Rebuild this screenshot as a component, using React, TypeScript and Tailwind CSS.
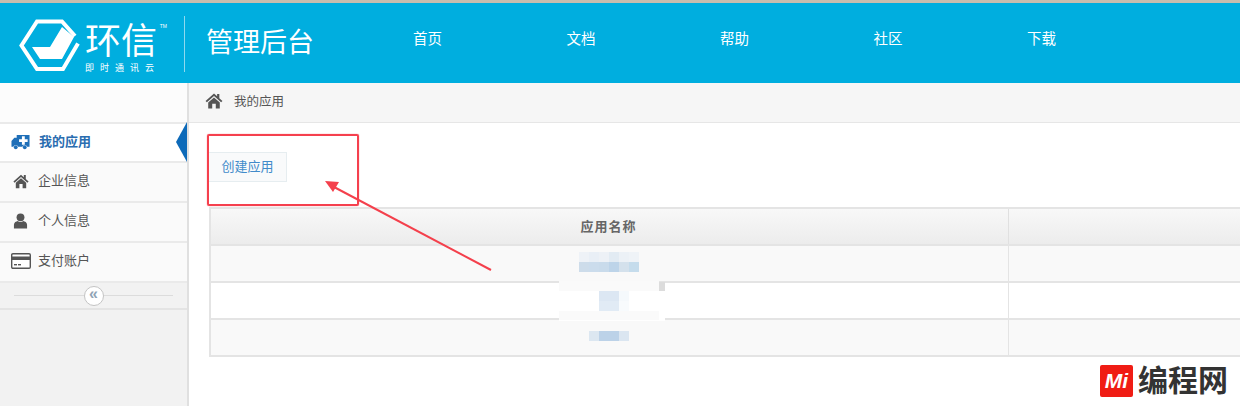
import React from "react";

const cjk = "font-['Liberation_Sans','Noto_Sans_CJK_SC',sans-serif]";

function Home({ className = "" }: { className?: string }) {
  return (
    <svg viewBox="0 0 20 18" className={className} fill="#555">
      <path d="M10 0.5 L0.5 9 L2 10.5 L10 3.5 L18 10.5 L19.5 9 L16 5.8 V1 H13.5 V3.6 Z" />
      <path d="M10 5 L3.5 10.6 V17.5 H8 V12 H12 V17.5 H16.5 V10.6 Z" />
    </svg>
  );
}

function Ambulance() {
  return (
    <svg viewBox="0 0 20 16" className="w-[19px] h-[16px]" fill="#1f6fb8">
      <path d="M6 0.5 H19.5 V13 H17 A2.6 2.6 0 0 0 12 13 H7.5 A2.6 2.6 0 0 0 2.5 13 H0.5 V7 L3.5 3.5 H6 Z" />
      <circle cx="5" cy="13.5" r="2" />
      <circle cx="14.5" cy="13.5" r="2" />
      <path d="M11.5 2 H14.5 V5 H17.5 V8 H14.5 V11 H11.5 V8 H8.5 V5 H11.5 Z" fill="#fff" />
    </svg>
  );
}

function User() {
  return (
    <svg viewBox="0 0 16 17" className="w-[15px] h-[16px]" fill="#555">
      <circle cx="8" cy="4.6" r="4.2" />
      <path d="M1 16.5 V12.5 C1 10 3.5 8.8 5 8.5 C6.5 9.8 9.5 9.8 11 8.5 C12.5 8.8 15 10 15 12.5 V16.5 Z" />
    </svg>
  );
}

function Card() {
  return (
    <svg viewBox="0 0 20 16" className="w-[20px] h-[16px]">
      <rect x="0.7" y="0.7" width="18.6" height="14.6" rx="1.2" fill="#fff" stroke="#555" strokeWidth="1.4" />
      <rect x="1" y="3.5" width="18" height="3.5" fill="#555" />
      <rect x="3" y="11" width="3" height="1.4" fill="#555" />
      <rect x="7" y="11" width="3" height="1.4" fill="#555" />
    </svg>
  );
}

function SideItem({ icon, label, active }: { icon: React.ReactNode; label: string; active?: boolean }) {
  return (
    <div
      className={
        "relative flex items-center border-b-2 border-[#eaeaea] pb-[2px] " +
        (active ? "h-[39px] bg-white" : "h-10 bg-[#fafafa]")
      }
    >
      <div className="w-[38px] shrink-0 flex justify-center pl-[4px] pr-[1px]">{icon}</div>
      <span className={"text-[13px] " + (active ? "font-bold text-[#2a6db0] ml-[1px]" : "text-[#555]")}>{label}</span>
      {active && (
        <div className="absolute right-0 top-[-2px] w-0 h-0 border-y-[20px] border-y-transparent border-r-[11px] border-r-[#0d6ab9]" />
      )}
    </div>
  );
}

function Pixels({ rows, w = 10 }: { rows: string[][]; w?: number }) {
  return (
    <div className="flex flex-col">
      {rows.map((r, i) => (
        <div key={i} className="flex justify-center h-[10px]">
          {r.map((c, j) => (
            <div key={j} className="h-full" style={{ width: w, background: c }} />
          ))}
        </div>
      ))}
    </div>
  );
}

function Row({ odd, children }: { odd: boolean; children?: React.ReactNode }) {
  return (
    <div className={"grid grid-cols-[798px_1fr] h-[37px] border-b-2 border-[#e4e4e4] " + (odd ? "bg-[#f9f9f9]" : "bg-white")}>
      <div className="border-r border-[#e4e4e4] flex items-center justify-center pb-[3px] pr-[2px]">{children}</div>
      <div />
    </div>
  );
}

export default function App() {
  const nav = ["首页", "文档", "帮助", "社区", "下载"];
  return (
    <div className={"relative w-[1240px] h-[406px] overflow-hidden bg-white " + cjk}>
      <div className="h-[3px] bg-[#c9bdae]" />
      <header className="h-[80px] bg-[#00aedf] flex items-center text-white">
        <div className="w-[185px] h-[56px] shrink-0 flex items-center pl-[15px] border-r border-[#8fd9ef] mt-[2px]">
          <svg viewBox="0 0 70 62" className="w-[70px] h-[62px] shrink-0 mt-[2px]">
            <path d="M63 29.5 L48 55 H22 L6.5 31.5 L22 7.5 H47 L60 22" fill="none" stroke="#fff" strokeWidth="4" />
            <path d="M17 33 H35 L47 13 L59 23 L47 45 H25 Z" fill="#fff" />
          </svg>
          <div className="flex flex-col items-start mt-[8px]">
            <div className="text-[36px] leading-[38px] relative whitespace-nowrap">
              环信
              <span className="absolute right-[-10px] top-[1px] text-[5px] leading-none">TM</span>
            </div>
            <div className="text-[9px] leading-[11px] tracking-[6px] mt-[2px] whitespace-nowrap">即时通讯云</div>
          </div>
        </div>
        <div className="w-[206px] shrink-0 pl-[21px] text-[27px] leading-none mt-[1px]">管理后台</div>
        <nav className="flex mt-[-9px] ml-[22px]">
          {nav.map((n) => (
            <div key={n} className="w-[153.5px] text-[14.5px] leading-5">{n}</div>
          ))}
        </nav>
      </header>
      <div className="flex h-[323px]">
        <aside className="w-[189px] shrink-0 bg-[#f2f2f2] border-r-2 border-[#e0e0e0]">
          <div className="h-[41px] bg-[#fcfcfc] border-b-2 border-[#eaeaea]" />
          <SideItem active icon={<Ambulance />} label="我的应用" />
          <SideItem icon={<Home className="w-[16px] h-[15px]" />} label="企业信息" />
          <SideItem icon={<User />} label="个人信息" />
          <SideItem icon={<Card />} label="支付账户" />
          <div className="h-[27px] border-b-2 border-[#e4e4e4] flex items-center justify-center px-[14px]">
            <div className="flex-1 h-px bg-[#dcdcdc]" />
            <div className="w-5 h-5 rounded-full bg-white border border-[#c4c4c4] flex items-center justify-center text-[#8fa3b5] text-[16px] font-bold leading-none pb-[3px]">«</div>
            <div className="flex-1 h-px bg-[#dcdcdc]" />
          </div>
        </aside>
        <main className="flex-1 min-w-0">
          <div className="h-[40px] bg-[#f6f6f6] border-b border-[#e6e6e6] flex items-center pl-[16px]">
            <Home className="w-[18px] h-[16px] mt-[-3px]" />
            <span className="ml-[11px] text-[12.5px] text-[#555] mt-[-1px]">我的应用</span>
          </div>
          <div className="pt-[29px] pl-[19px]">
            <div className="w-[79px] h-[30px] bg-[#f9fafb] border border-[#e6edf0] flex items-center justify-center text-[13px] text-[#428bca]">
              创建应用
            </div>
          </div>
          <div className="mt-[25px] ml-[20px] border-l-2 border-[#e4e4e4]">
            <div className="grid grid-cols-[798px_1fr] h-[39px] border-y-2 border-[#e4e4e4] bg-gradient-to-b from-[#f8f8f8] to-[#ececec]">
              <div className="border-r border-[#e0e0e0] flex items-center justify-center text-[13px] font-bold text-[#666] tracking-[1px] pr-[2px]">应用名称</div>
              <div />
            </div>
            <Row odd>
              <Pixels rows={[
                ["#eef2f7", "#e9eff6", "#edf1f6", "#e2ebf3", "#ecf1f6", "#eff3f7"],
                ["#cddcea", "#cbdcec", "#c9dbeb", "#bdd4e9", "#d4e1ec", "#c5dcec"],
              ]} />
            </Row>
            <Row odd={false} />
            <Row odd>
              <Pixels rows={[["#dce7f1", "#bcd2e8", "#bcd2e8", "#dbe6f1"]]} />
            </Row>
          </div>
        </main>
      </div>

      <div className="absolute left-[559px] top-[281px] w-[100px] h-[40px] bg-[#fafafa]" />
      <div className="absolute left-[559px] top-[291px] w-[106px] h-[30px] bg-white" />
      <div className="absolute left-[659px] top-[282px] w-[6px] h-[9px] bg-[#dcdcdc]" />
      <div className="absolute left-[559px] top-[311px] w-[100px] h-[9px] bg-[#fafafa]" />
      <div className="absolute left-[599px] top-[291px] flex flex-col">
        <Pixels rows={[
          ["#dce7f3", "#dce7f3", "#f5f9fc"],
          ["#e1ebf5", "#e1ebf5", "#f8fbfd"],
        ]} />
      </div>

      <div className="absolute left-[207px] top-[134px] w-[152px] h-[72px] border-2 border-[#f5404e] rounded-[2px] shadow-[0_0_1px_#f5404e]" />
      <svg className="absolute left-[320px] top-[178px] w-[180px] h-[100px]" viewBox="0 0 180 100">
        <line x1="171" y1="92" x2="14" y2="9" stroke="#f4404c" strokeWidth="2" />
        <path d="M5 3 L19 4 L13 14 Z" fill="#f4404c" />
      </svg>

      <div className="absolute left-[1100px] top-[365px] flex items-center bg-white">
        <div className="w-[33px] h-[32px] bg-[#f01c14] rounded-[2px] text-white italic font-bold text-[21px] leading-[32px] text-center font-['Liberation_Sans',sans-serif]">Mi</div>
        <span className="ml-[5px] text-[30px] leading-[32px] font-bold text-[#333]">编程网</span>
      </div>
    </div>
  );
}
